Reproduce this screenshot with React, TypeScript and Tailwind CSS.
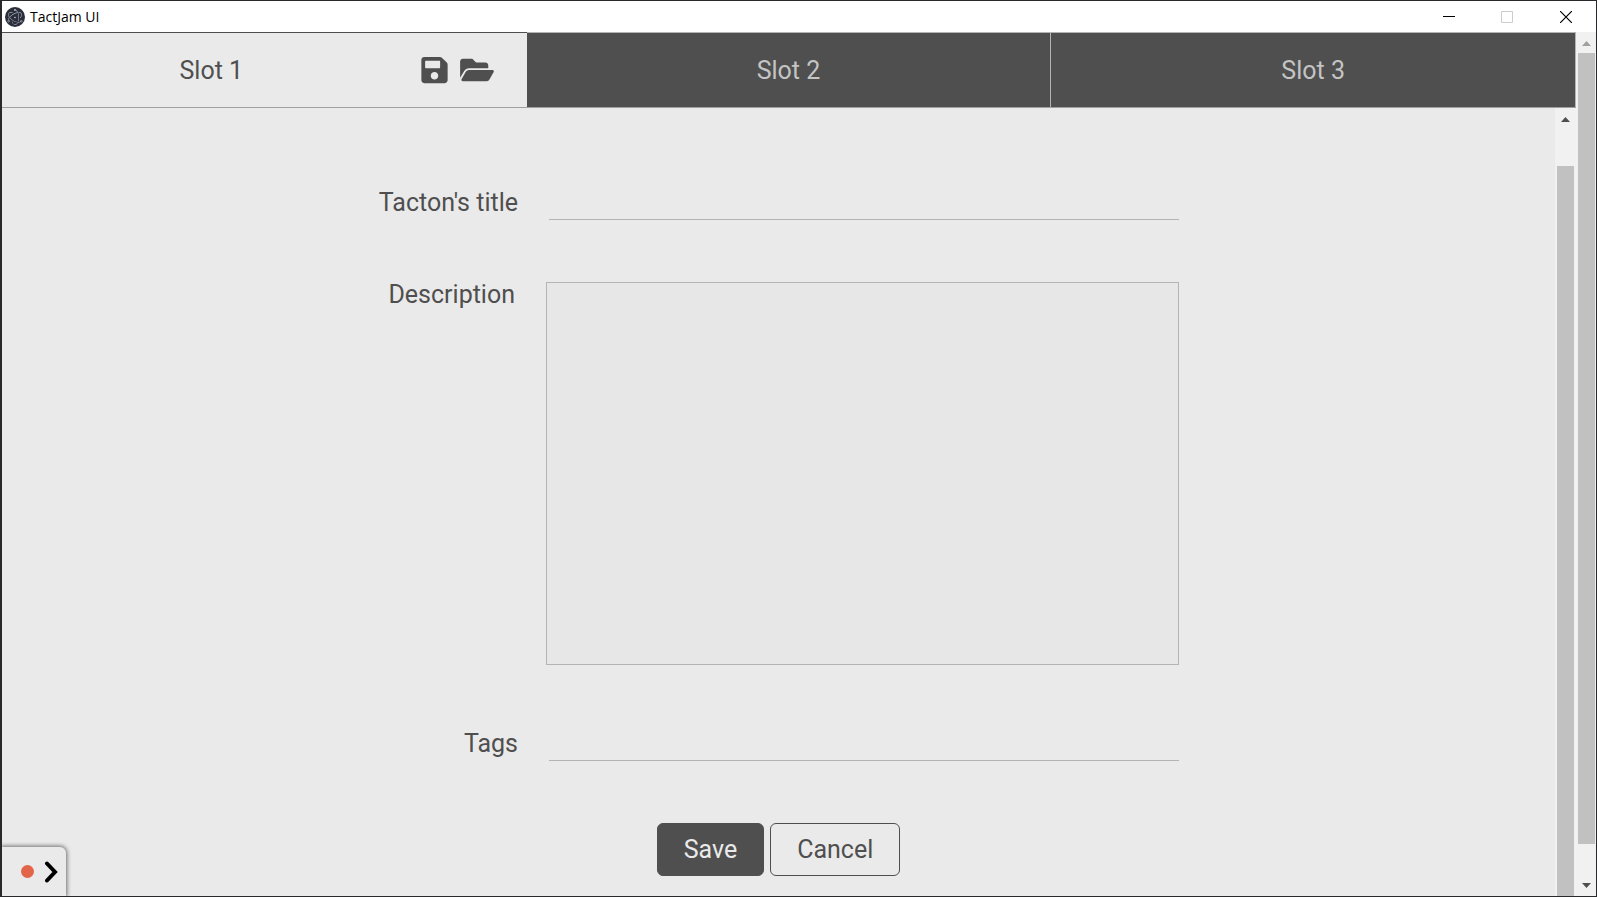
import { FaFolderOpen, FaSave } from "react-icons/fa";
import { SiElectron } from "react-icons/si";

function TitleBar() {
  return (
    <header className="flex h-[31px] shrink-0 items-center bg-white pl-[3px] text-black">
      <span className="flex size-5 items-center justify-center rounded-full bg-[#2b2e3a] text-[#cfe0ea]">
        <SiElectron className="size-4" aria-hidden="true" />
      </span>
      <h1 className="ml-[5px] font-['Open_Sans','Noto_Sans',sans-serif] text-sm leading-5">TactJam UI</h1>
      <div className="ml-auto flex h-full">
        <button type="button" aria-label="Minimize" className="flex w-[58px] items-center justify-center">
          <svg width="12" height="12" viewBox="0 0 12 12" stroke="currentColor" shapeRendering="crispEdges">
            <path d="M0 5.5H12" />
          </svg>
        </button>
        <button type="button" aria-label="Maximize" disabled className="flex w-[58px] items-center justify-center text-[#cccccc]">
          <svg width="12" height="12" viewBox="0 0 12 12" fill="none" stroke="currentColor">
            <path d="M.5 .5H11.5V11.5H.5Z" />
          </svg>
        </button>
        <button type="button" aria-label="Close" className="flex w-[60px] items-center justify-center">
          <svg width="12" height="12" viewBox="0 0 12 12" stroke="currentColor" strokeWidth="1.2">
            <path d="M0 0L12 12M12 0L0 12" />
          </svg>
        </button>
      </div>
    </header>
  );
}

function Arrow({ down = false, className }: { down?: boolean; className: string }) {
  return (
    <svg width="9" height="5" viewBox="0 0 9 5" fill="currentColor" className={className} aria-hidden="true">
      <path d={down ? "M0 0H9L4.5 5Z" : "M0 5H9L4.5 0Z"} />
    </svg>
  );
}

function Tabs() {
  return (
    <nav className="grid h-[76px] shrink-0 grid-cols-3 border-b border-[#a0a0a0] text-[25px]">
      <div className="flex items-center border-t border-[#4f4f4f]">
        <button type="button" className="h-full flex-1 pt-0.5 text-[#4f4f4f]">Slot 1</button>
        <div className="mr-[33px] flex items-center gap-3 text-[#4f4f4f]">
          <button type="button" aria-label="Save tacton">
            <FaSave className="h-[30px] w-[27px]" />
          </button>
          <button type="button" aria-label="Open tacton">
            <FaFolderOpen className="h-[30px] w-[34px]" />
          </button>
        </div>
      </div>
      <button type="button" className="border-t border-r border-[#b4b4b4] bg-[#4f4f4f] pt-0.5 text-[#c4c4c4]">Slot 2</button>
      <button type="button" className="border-t border-r border-[#b4b4b4] bg-[#4f4f4f] pt-0.5 text-[#c4c4c4]">Slot 3</button>
    </nav>
  );
}

function MetadataForm() {
  return (
    <form className="mx-auto flex w-full max-w-[801px] flex-col pt-[76px]" onSubmit={(e) => e.preventDefault()}>
      <div className="grid grid-cols-[140px_1fr] items-start gap-x-7">
        <label htmlFor="title" className="pt-1 text-right leading-[30px]">Tacton's title</label>
        <input id="title" type="text" className="ml-[3px] h-9 border-b border-[#b4b4b4] bg-transparent outline-none" />
        <label htmlFor="description" className="mt-[62px] mr-[3px] text-right leading-[26px]">Description</label>
        <textarea
          id="description"
          className="mt-[62px] h-[383px] resize-none border border-[#b4b4b4] bg-[#e7e7e7] p-2 outline-none"
        />
        <label htmlFor="tags" className="mt-[60px] pt-1 text-right leading-[30px]">Tags</label>
        <input id="tags" type="text" className="mt-[60px] ml-[3px] h-9 border-b border-[#b4b4b4] bg-transparent outline-none" />
      </div>
      <div className="mt-[62px] flex justify-center gap-1.5">
        <button type="submit" className="h-[53px] rounded-md border border-[#4f4f4f] bg-[#4f4f4f] px-[26px] text-[#eaeaea]">
          Save
        </button>
        <button type="button" className="h-[53px] rounded-md border border-[#4f4f4f] px-[26px]">
          Cancel
        </button>
      </div>
    </form>
  );
}

function RecorderHandle() {
  return (
    <button
      type="button"
      aria-label="Expand recorder"
      className="absolute bottom-0 left-0 flex h-[49px] w-16 items-center gap-2.5 rounded-tr-md bg-[#eaeaea] pl-[19px] shadow-[0_0_4px_1px_#6b6b6b]"
    >
      <span className="size-[13px] rounded-full bg-[#e2654a]" />
      <svg width="14" height="22" viewBox="0 0 14 22" fill="none" stroke="#000" strokeWidth="4" strokeLinecap="round">
        <path d="M3 2.5L11 11L3 19.5" />
      </svg>
    </button>
  );
}

export default function App() {
  return (
    <div className="flex h-screen flex-col border-t border-r border-b border-l-2 border-[#29292c] bg-[#eaeaea] font-[Roboto,sans-serif] text-[#4f4f4f]">
      <TitleBar />
      <div className="flex min-h-0 flex-1">
        <div className="flex min-w-0 flex-1 flex-col">
          <Tabs />
          <div className="relative flex min-h-0 flex-1 overflow-hidden">
            <main className="min-w-0 flex-1 text-[25px]">
              <MetadataForm />
            </main>
            <div className="flex w-[21px] flex-col items-center bg-[#f1f1f1] pr-px">
              <Arrow className="mt-[9px] shrink-0 text-[#4f4f4f]" />
              <div className="mt-11 w-[17px] flex-1 bg-[#c1c1c1]" />
            </div>
            <RecorderHandle />
          </div>
        </div>
        <div className="flex w-5 flex-col items-center bg-[#f1f1f1]">
          <Arrow className="mt-[9px] shrink-0 text-[#a0a0a0]" />
          <div className="mt-[7px] w-[17px] flex-1 bg-[#c1c1c1]" />
          <Arrow down className="mt-[39px] mb-2 shrink-0 text-[#4f4f4f]" />
        </div>
      </div>
    </div>
  );
}
